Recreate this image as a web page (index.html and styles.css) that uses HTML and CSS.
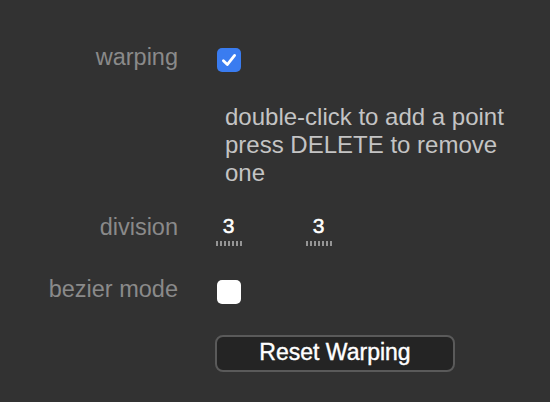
FILE: index.html
```html
<!DOCTYPE html>
<html>
<head>
<meta charset="utf-8">
<link rel="stylesheet" href="styles.css">
</head>
<body>
<div class="panel">
  <div class="row row-warp">
    <div class="label">warping</div>
    <span class="check on">
      <svg width="24" height="24" viewBox="0 0 24 24"><path d="M6.4 12.8 L10.3 16.6 L17.6 7.4" fill="none" stroke="#fff" stroke-width="2.8" stroke-linecap="round" stroke-linejoin="round"/></svg>
    </span>
  </div>
  <div class="row row-help">
    <div class="help">double-click to add a point press DELETE to remove one</div>
  </div>
  <div class="row row-div">
    <div class="label">division</div>
    <div class="nums">
      <div class="num"><span class="val">3</span><span class="ticks"></span></div>
      <div class="num"><span class="val">3</span><span class="ticks"></span></div>
    </div>
  </div>
  <div class="row row-bez">
    <div class="label">bezier mode</div>
    <span class="check"></span>
  </div>
  <div class="row row-btn">
    <button class="btn">Reset Warping</button>
  </div>
</div>
</body>
</html>
```
FILE: styles.css
```css
html, body {
  margin: 0;
  padding: 0;
  background: #323232;
  width: 550px;
  height: 402px;
  overflow: hidden;
  font-family: "Liberation Sans", Arial, sans-serif;
}
.panel {
  padding-top: 48px;
  display: flex;
  flex-direction: column;
}
.row {
  display: flex;
  align-items: center;
}
.label {
  width: 178px;
  margin-right: 39px;
  padding-bottom: 6px;
  text-align: right;
  color: #8a8a8a;
  font-size: 23.5px;
  line-height: 24px;
}
.check {
  width: 24px;
  height: 24px;
  border-radius: 5px;
  background: #ffffff;
  display: block;
}
.check.on {
  background: #3a7cf0;
}
.check svg {
  display: block;
}
.row-warp { height: 24px; }
.row-help { margin-top: 31px; }
.help {
  margin-left: 225px;
  width: 300px;
  color: #c4c4c4;
  font-size: 24px;
  line-height: 28px;
}
.row-div {
  margin-top: 29px;
  align-items: flex-start;
  height: 30px;
}
.row-div .label {
  margin-top: -1px;
}
.nums {
  display: flex;
  gap: 63px;
  margin-left: -2px;
}
.num {
  width: 27px;
  display: flex;
  flex-direction: column;
  align-items: center;
}
.val {
  color: #ffffff;
  font-size: 21px;
  line-height: 20px;
  -webkit-text-stroke: 0.5px #ffffff;
}
.ticks {
  margin-top: 5px;
  width: 26px;
  height: 5px;
  background: repeating-linear-gradient(to right, #959595 0 2px, transparent 2px 4px);
}
.row-bez {
  margin-top: 34px;
  height: 24px;
}
.row-btn {
  margin-top: 31px;
  padding-left: 215px;
}
.btn {
  width: 240px;
  height: 37px;
  box-sizing: border-box;
  border: 2px solid #5a5a5a;
  border-radius: 8px;
  background: #242424;
  color: #ffffff;
  font-family: "Liberation Sans", Arial, sans-serif;
  font-size: 23px;
  line-height: 28px;
  -webkit-text-stroke: 0.4px #ffffff;
  padding: 0 0 3px 0;
  margin: 0;
}
```
